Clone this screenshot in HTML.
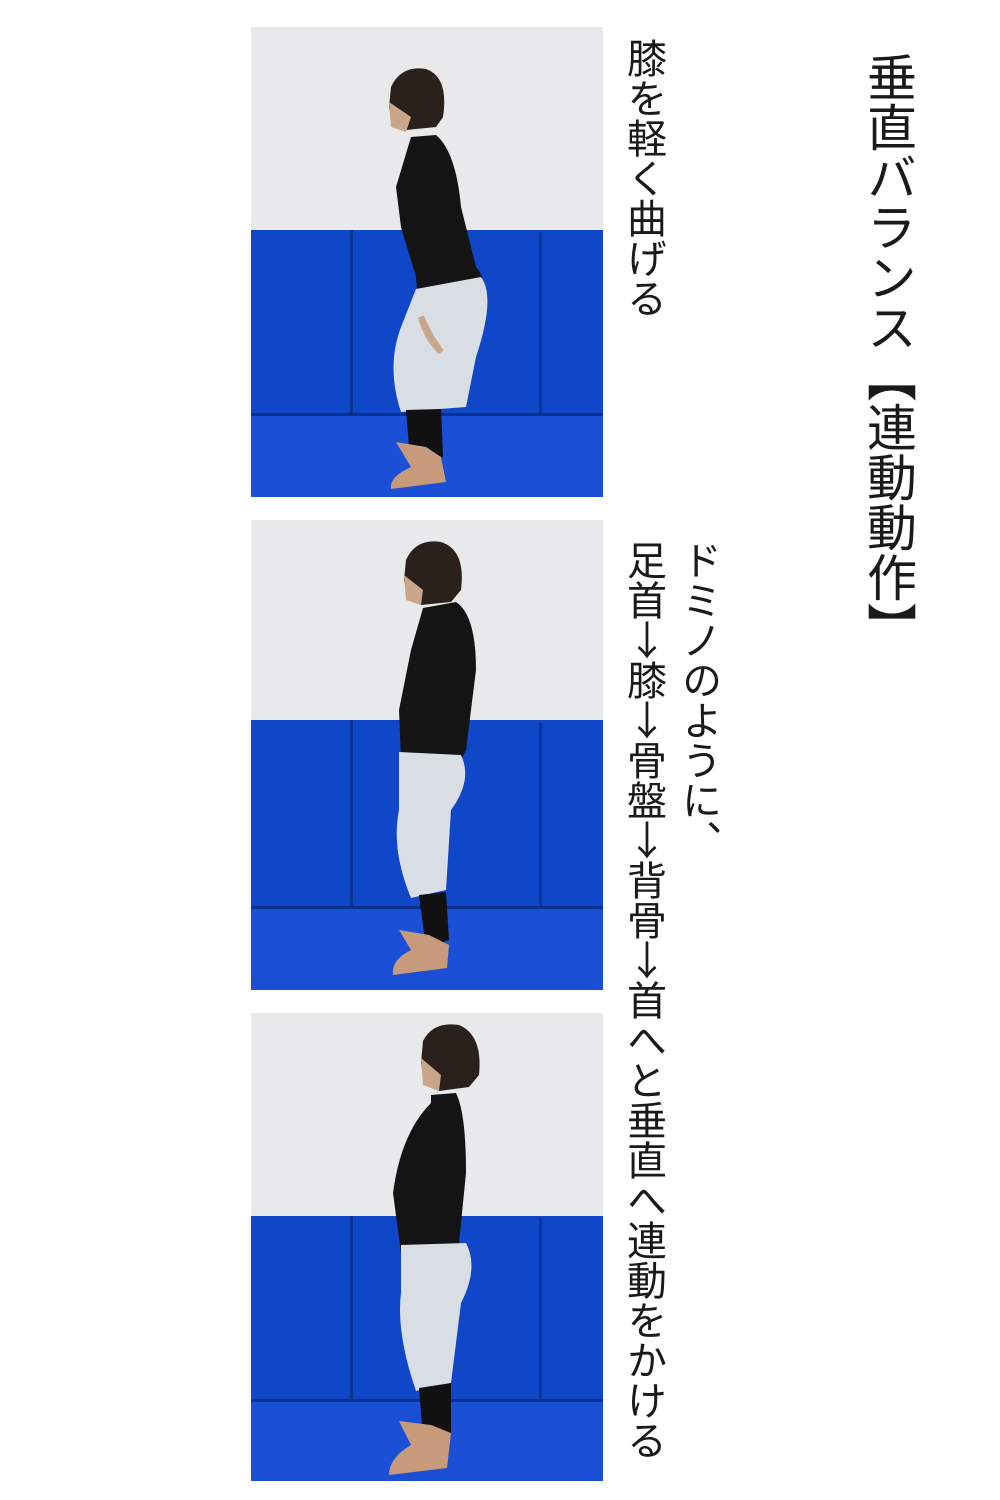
<!DOCTYPE html>
<html><head><meta charset="utf-8"><style>
body{margin:0;background:#fff;width:1000px;height:1500px;position:relative;overflow:hidden;font-family:"Liberation Sans","Noto Sans CJK JP",sans-serif;color:#1a1a1a}
.ph{position:absolute;left:251px;width:352px;height:470px}
.v{position:absolute;writing-mode:vertical-rl;white-space:nowrap;font-family:"Noto Sans CJK JP",sans-serif;line-height:1}
.u{text-orientation:upright}
</style></head><body>
<svg class="ph" style="top:27px" viewBox="0 0 352 470">
<rect width="352" height="470" fill="#e7e9ea"/><rect y="203" width="352" height="267" fill="#1046c8"/><rect y="388" width="352" height="82" fill="#1a4fd6"/>
<rect x="99" y="203" width="3" height="185" fill="#0b3499"/><rect x="288" y="205" width="3" height="183" fill="#0b3499"/><rect y="386" width="352" height="3" fill="#0a3090"/>
<path d="M140 60 Q150 38 175 42 Q198 50 192 90 L185 100 L155 103 Q140 95 138 80Z" fill="#2a211c"/><path d="M138 75 L140 100 L155 105 L160 90Z" fill="#c9a58a"/>
<path d="M160 110 L185 108 Q205 125 210 180 L225 240 Q238 255 228 270 L185 280 L180 290 L168 290 L165 250 L150 200 L145 160Z" fill="#141414"/>
<path d="M165 262 L230 250 Q245 270 225 330 L215 380 L150 385 Q135 340 150 300Z" fill="#d9dde4"/>
<path d="M155 383 L190 382 L192 430 L170 440 L158 420Z" fill="#111"/>
<path d="M145 415 L175 420 L190 430 L195 455 L140 462 Q138 450 160 440Z" fill="#c79a7c"/>
<path d="M170 290 Q175 310 190 325 L180 310Z" fill="#c9a58a" stroke="#c9a58a" stroke-width="6"/>
</svg>
<svg class="ph" style="top:520px" viewBox="0 0 352 470">
<rect width="352" height="470" fill="#e7e9ea"/><rect y="200" width="352" height="270" fill="#1046c8"/><rect y="388" width="352" height="82" fill="#1a4fd6"/>
<rect x="99" y="200" width="3" height="188" fill="#0b3499"/><rect x="288" y="203" width="3" height="185" fill="#0b3499"/><rect y="386" width="352" height="3" fill="#0a3090"/>
<path d="M155 40 Q165 18 190 22 Q215 30 210 70 L200 82 L170 85 Q155 75 153 60Z" fill="#2a211c"/><path d="M153 55 L155 80 L170 85 L172 70Z" fill="#c9a58a"/>
<path d="M172 88 L205 82 Q225 95 225 150 L215 230 L200 260 L185 260 L170 240 L150 240 L148 190 L160 130Z" fill="#141414"/>
<path d="M148 232 L210 235 Q222 260 200 290 L195 370 L160 378 Q140 330 148 290Z" fill="#d9dde4"/>
<path d="M168 375 L195 372 L198 420 L175 428Z" fill="#111"/>
<path d="M148 410 L178 415 L198 425 L196 448 L142 455 Q140 440 160 430Z" fill="#c79a7c"/>
</svg>
<svg class="ph" style="top:1012px" viewBox="0 0 352 468">
<rect width="352" height="468" fill="#e7e9ea"/><rect y="203" width="352" height="265" fill="#1046c8"/><rect y="388" width="352" height="80" fill="#1a4fd6"/>
<rect x="99" y="203" width="3" height="185" fill="#0b3499"/><rect x="288" y="205" width="3" height="183" fill="#0b3499"/><rect y="386" width="352" height="3" fill="#0a3090"/>
<path d="M172 28 Q182 8 208 12 Q232 22 228 62 L218 74 L188 78 Q172 68 170 50Z" fill="#2a211c"/><path d="M170 45 L172 72 L188 78 L190 62Z" fill="#c9a58a"/>
<path d="M180 82 L205 80 Q215 100 215 160 L208 230 L200 250 L185 250 L150 240 L142 180 Q150 120 180 90Z" fill="#141414"/>
<path d="M150 232 L215 230 Q228 255 210 290 L200 370 L165 378 Q145 320 150 280Z" fill="#d9dde4"/>
<path d="M168 375 L200 370 L200 420 L172 425Z" fill="#111"/>
<path d="M148 408 L180 412 L200 420 L196 455 L138 462 Q138 445 160 432Z" fill="#c79a7c"/>
</svg>
<div class="v" style="left:867px;top:52px;font-size:50px">垂直バランス【連動動作】</div>
<div class="v" style="left:627px;top:38px;font-size:40px">膝を軽く曲げる</div>
<div class="v" style="left:682px;top:540px;font-size:40px">ドミノのように、</div>
<div class="v" style="left:627px;top:540px;font-size:40px">足首<span class="u">↓</span>膝<span class="u">↓</span>骨盤<span class="u">↓</span>背骨<span class="u">↓</span>首へと垂直へ連動をかける</div>
</body></html>
